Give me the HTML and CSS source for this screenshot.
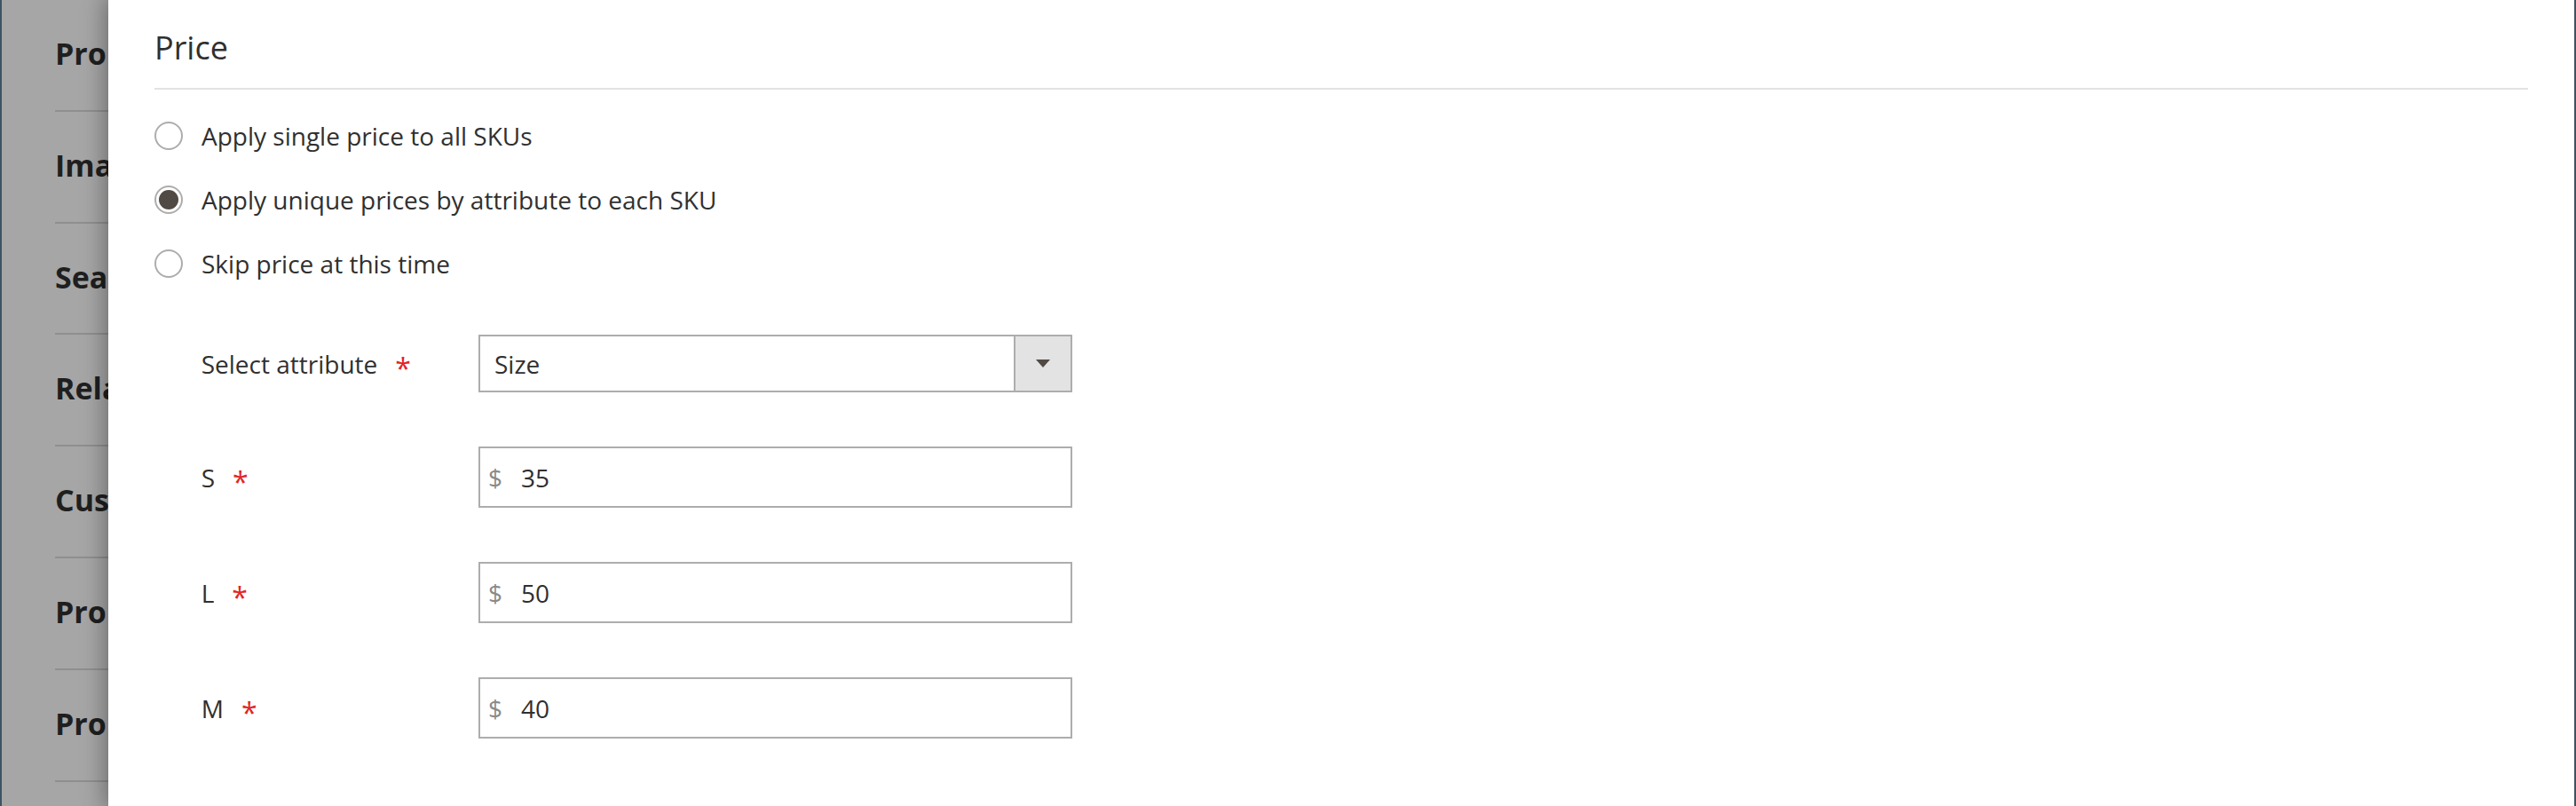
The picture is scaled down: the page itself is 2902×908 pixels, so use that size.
FILE: index.html
```html
<!DOCTYPE html>
<html lang="en">
<head>
<meta charset="utf-8">
<title>Price</title>
<link rel="stylesheet" href="styles.css">
</head>
<body>
<div class="screen">
  <aside class="page-behind">
    <div class="section-title"><span class="section-text">Pro</span></div>
    <div class="section-title"><span class="section-text">Ima</span></div>
    <div class="section-title"><span class="section-text">Sea</span></div>
    <div class="section-title"><span class="section-text">Rela</span></div>
    <div class="section-title"><span class="section-text">Cus</span></div>
    <div class="section-title"><span class="section-text">Pro</span></div>
    <div class="section-title"><span class="section-text">Pro</span></div>
    <div class="section-title"><span class="section-text">Gif</span></div>
  </aside>
  <main class="modal">
    <header class="step-header">
      <h2 class="step-title">Price</h2>
    </header>
    <div class="radio-list">
      <div class="radio-row"><span class="radio"></span><span class="radio-text">Apply single price to all SKUs</span></div>
      <div class="radio-row"><span class="radio checked"></span><span class="radio-text">Apply unique prices by attribute to each SKU</span></div>
      <div class="radio-row"><span class="radio"></span><span class="radio-text">Skip price at this time</span></div>
    </div>
    <div class="fields">
      <div class="field">
        <span class="field-label">Select attribute<span class="req">*</span></span>
        <div class="select">
          <span class="select-value">Size</span>
          <span class="select-btn"><svg class="caret" width="16" height="9" viewBox="0 0 16 9"><polygon points="0,0 16,0 8,9" fill="#514943"/></svg></span>
        </div>
      </div>
      <div class="field">
        <span class="field-label">S<span class="req">*</span></span>
        <div class="input"><span class="prefix">$</span><span class="value">35</span></div>
      </div>
      <div class="field">
        <span class="field-label">L<span class="req">*</span></span>
        <div class="input"><span class="prefix">$</span><span class="value">50</span></div>
      </div>
      <div class="field">
        <span class="field-label">M<span class="req">*</span></span>
        <div class="input"><span class="prefix">$</span><span class="value">40</span></div>
      </div>
    </div>
  </main>
</div>
</body>
</html>
```

FILE: styles.css
```css
* { box-sizing: border-box; }
html, body { margin: 0; padding: 0; }
body {
  width: 2902px;
  height: 908px;
  overflow: hidden;
  font-family: "Open Sans", "Noto Sans", sans-serif;
  color: #303030;
  background: #a6a6a6;
}
.screen { display: flex; height: 908px; }

.page-behind {
  width: 122px;
  flex: none;
  background: #a6a6a6;
  border-left: 2px solid #3e5361;
  overflow: hidden;
}
.section-title {
  margin-left: 60px;
  width: 200px;
  height: 125.8px;
  padding-top: 40px;
  border-bottom: 2px solid #8f8f8f;
  font-size: 34px;
  font-weight: 700;
  line-height: 40.8px;
  color: #1f1f1f;
}
.section-text {
  display: block;
  width: 60px;
  overflow: hidden;
  white-space: nowrap;
}

.modal {
  flex: 1;
  position: relative;
  z-index: 1;
  background: #fff;
  border-right: 2px solid #3e5361;
  box-shadow: 0 0 24px 4px rgba(0, 0, 0, 0.35);
  padding: 32px 52px 0 52px;
}
.step-header {
  padding-bottom: 23px;
  border-bottom: 2px solid #e3e3e3;
}
.step-title {
  margin: 0;
  font-size: 36px;
  font-weight: 400;
  line-height: 44px;
  color: #303030;
}

.radio-list {
  margin-top: 15.5px;
  display: flex;
  flex-direction: column;
}
.radio-row {
  display: flex;
  align-items: center;
  height: 72px;
  font-size: 28px;
  line-height: 38px;
}
.radio {
  flex: none;
  width: 32px;
  height: 32px;
  margin-right: 21px;
  border: 2px solid #adadad;
  border-radius: 50%;
  display: flex;
  align-items: center;
  justify-content: center;
}
.radio.checked::after {
  content: "";
  width: 22px;
  height: 22px;
  border-radius: 50%;
  background: #514943;
}

.fields {
  margin-top: 44.8px;
  margin-left: 52.7px;
  display: flex;
  flex-direction: column;
  gap: 61px;
}
.field { display: flex; align-items: center; }
.field-label {
  flex: none;
  width: 312.3px;
  font-size: 28px;
  line-height: 38px;
}
.req {
  color: #e22626;
  font-size: 32px;
  line-height: 0;
  margin-left: 20px;
  vertical-align: -6px;
}
.select {
  width: 669px;
  height: 65px;
  border: 2px solid #adadad;
  display: flex;
  align-items: stretch;
}
.select-value {
  flex: 1;
  display: flex;
  align-items: center;
  padding-left: 16px;
  font-size: 28px;
}
.select-btn {
  flex: none;
  width: 64px;
  border-left: 2px solid #adadad;
  background: #e3e3e3;
  display: flex;
  align-items: center;
  justify-content: center;
}
.caret { display: block; }
.input {
  width: 669px;
  height: 69px;
  border: 2px solid #adadad;
  display: flex;
  align-items: center;
  padding-left: 9px;
  font-size: 28px;
}
.prefix { color: #8a8a8a; margin-right: 21px; }
.value { color: #303030; }
```
